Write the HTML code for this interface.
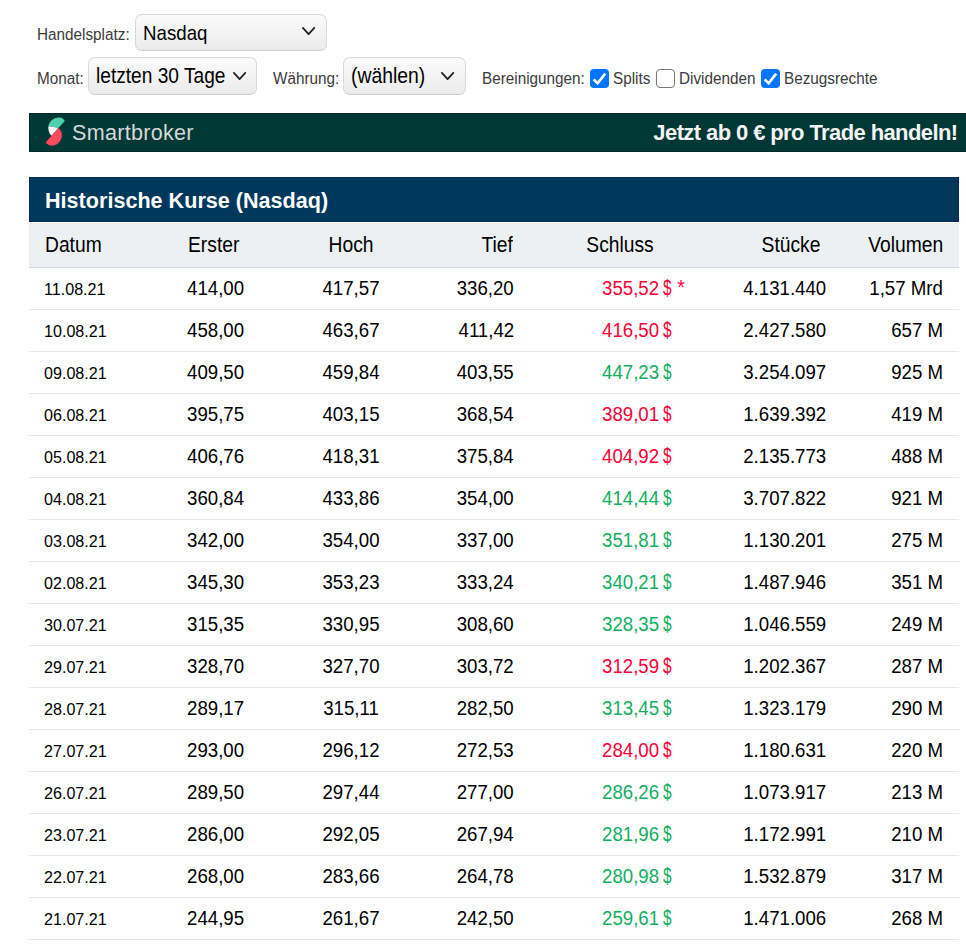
<!DOCTYPE html>
<html><head><meta charset="utf-8"><style>
*{margin:0;padding:0;box-sizing:border-box}
html,body{width:966px;height:951px;overflow:hidden;background:#fff}
body{position:relative;font-family:"Liberation Sans",sans-serif;color:#000}
.t{position:absolute;white-space:nowrap;line-height:1}
.sel{position:absolute;border:1px solid #d9d9d9;border-bottom-color:#cdcdcd;border-radius:7px;background:linear-gradient(#fbfbfb,#ebebeb)}
.chev{position:absolute}
.cb{position:absolute;border-radius:4px}
.line{position:absolute;left:29px;width:930px;height:1px;background:#e8e8e8}
</style></head>
<body>
<div class="t" style="top:26.63px;font-size:15.8px;color:#3b3b3b;left:36.7px;transform:scaleX(0.968);transform-origin:left 0;">Handelsplatz:</div>
<div class="sel" style="left:135px;top:14px;width:192px;height:37px"></div>
<div class="t" style="top:22.22px;font-size:21px;left:143px;transform:scaleX(0.89);transform-origin:left 0;">Nasdaq</div>
<svg class="chev" style="left:300.8px;top:26.3px" width="16" height="11" viewBox="0 0 16 11"><path d="M1.9 1.9 L7.6 8.1 L13.3 1.9" fill="none" stroke="#222" stroke-width="1.8" stroke-linecap="round" stroke-linejoin="round"/></svg>
<div class="t" style="top:70.63px;font-size:15.8px;color:#3b3b3b;left:36.7px;transform:scaleX(0.968);transform-origin:left 0;">Monat:</div>
<div class="sel" style="left:88px;top:57px;width:169px;height:38px"></div>
<div class="t" style="top:65.80px;font-size:21.5px;left:96.3px;transform:scaleX(0.89);transform-origin:left 0;">letzten 30 Tage</div>
<svg class="chev" style="left:232.2px;top:71px" width="16" height="11" viewBox="0 0 16 11"><path d="M1.9 1.9 L7.6 8.1 L13.3 1.9" fill="none" stroke="#222" stroke-width="1.8" stroke-linecap="round" stroke-linejoin="round"/></svg>
<div class="t" style="top:70.63px;font-size:15.8px;color:#3b3b3b;left:272.8px;transform:scaleX(0.968);transform-origin:left 0;">Währung:</div>
<div class="sel" style="left:343px;top:57px;width:123px;height:38px"></div>
<div class="t" style="top:65.80px;font-size:21.5px;left:351px;transform:scaleX(0.9);transform-origin:left 0;">(wählen)</div>
<svg class="chev" style="left:439.7px;top:71px" width="16" height="11" viewBox="0 0 16 11"><path d="M1.9 1.9 L7.6 8.1 L13.3 1.9" fill="none" stroke="#222" stroke-width="1.8" stroke-linecap="round" stroke-linejoin="round"/></svg>
<div class="t" style="top:70.63px;font-size:15.8px;color:#3b3b3b;left:481.7px;transform:scaleX(0.968);transform-origin:left 0;">Bereinigungen:</div>
<div class="cb" style="left:590px;top:69px;width:19px;height:19px;background:#0075ff"></div><svg class="chev" style="left:590px;top:69px" width="19" height="19" viewBox="0 0 19 19"><path d="M3.6 10.4 L7.6 14.3 L15.2 4.6" fill="none" stroke="#fff" stroke-width="2.6"/></svg>
<div class="t" style="top:70.63px;font-size:15.8px;color:#3b3b3b;left:612.7px;transform:scaleX(0.968);transform-origin:left 0;">Splits</div>
<div class="cb" style="left:656px;top:69px;width:19px;height:19px;border:1px solid #767676;background:#fff"></div>
<div class="t" style="top:70.63px;font-size:15.8px;color:#3b3b3b;left:678.5px;transform:scaleX(0.968);transform-origin:left 0;">Dividenden</div>
<div class="cb" style="left:761px;top:69px;width:19px;height:19px;background:#0075ff"></div><svg class="chev" style="left:761px;top:69px" width="19" height="19" viewBox="0 0 19 19"><path d="M3.6 10.4 L7.6 14.3 L15.2 4.6" fill="none" stroke="#fff" stroke-width="2.6"/></svg>
<div class="t" style="top:70.63px;font-size:15.8px;color:#3b3b3b;left:784.2px;transform:scaleX(0.968);transform-origin:left 0;">Bezugsrechte</div>
<div style="position:absolute;left:29px;top:113px;width:937px;height:39px;background:#003836;border:1px solid #002a28;border-right:0"></div>
<svg style="position:absolute;left:40px;top:114px" width="32" height="36" viewBox="0 0 32 36"><path d="M8.4 12.2 C9.5 6.5 15 3.2 19.5 3.6 C22 3.8 23.8 5.2 24.8 7 L18.2 14.3 C15 13 11.5 12.2 8.4 12.2 Z" fill="#4fd0ac"/><path d="M8.4 12.2 C11.5 12.2 15 13 18.2 14.3 L11.6 21.8 C9 19.5 8 16 8.4 12.2 Z" fill="#fff"/><path d="M18.2 14.3 C21.5 16 22.5 20 21.5 24 C20 29 16 31.5 12 31.5 C9.5 31.5 7 30.5 5.6 28.4 C8 25.5 10 24 11.6 21.8 Z" fill="#fa4a5e"/></svg>
<div class="t" style="top:121.98px;font-size:22px;color:#d5d9d9;letter-spacing:0.3px;left:72px;transform:scaleX(0.98);transform-origin:left 0;">Smartbroker</div>
<div class="t" style="top:121.68px;font-size:22px;font-weight:700;color:#f4f4f4;letter-spacing:-0.6px;right:8.5px;">Jetzt ab 0 € pro Trade handeln!</div>
<div style="position:absolute;left:29px;top:177px;width:930px;height:45px;background:#00385c;border:1px solid #002e56"></div>
<div class="t" style="top:189.72px;font-size:21.6px;font-weight:700;color:#fff;left:45px;">Historische Kurse (Nasdaq)</div>
<div style="position:absolute;left:29px;top:223px;width:930px;height:44px;background:#ecf0f3"></div>
<div style="position:absolute;left:29px;top:267px;width:930px;height:1px;background:#d0d9e0"></div>
<div class="t" style="top:234.68px;font-size:21.4px;left:44.5px;transform:scaleX(0.9);transform-origin:left 0;">Datum</div>
<div class="t" style="top:234.68px;font-size:21.4px;left:188px;transform:scaleX(0.9);transform-origin:left 0;">Erster</div>
<div class="t" style="top:234.68px;font-size:21.4px;left:200.5px;width:300px;text-align:center;transform:scaleX(0.9);transform-origin:center 0;">Hoch</div>
<div class="t" style="top:234.68px;font-size:21.4px;right:453px;transform:scaleX(0.9);transform-origin:right 0;">Tief</div>
<div class="t" style="top:234.68px;font-size:21.4px;left:469.5px;width:300px;text-align:center;transform:scaleX(0.9);transform-origin:center 0;">Schluss</div>
<div class="t" style="top:234.68px;font-size:21.4px;right:146px;transform:scaleX(0.9);transform-origin:right 0;">Stücke</div>
<div class="t" style="top:234.68px;font-size:21.4px;right:23px;transform:scaleX(0.9);transform-origin:right 0;">Volumen</div>
<div class="t" style="top:282.18px;font-size:16.8px;left:43.8px;transform:scaleX(0.96);transform-origin:left 0;">11.08.21</div>
<div class="t" style="top:278.05px;font-size:20.5px;left:187px;transform:scaleX(0.91);transform-origin:left 0;">414,00</div>
<div class="t" style="top:278.05px;font-size:20.5px;left:200.5px;width:300px;text-align:center;transform:scaleX(0.91);transform-origin:center 0;">417,57</div>
<div class="t" style="top:278.05px;font-size:20.5px;right:452px;transform:scaleX(0.91);transform-origin:right 0;">336,20</div>
<div class="t" style="top:278.05px;font-size:20.5px;color:#ff0036;left:602px;transform:scaleX(0.91);transform-origin:left 0;">355,52</div>
<div class="t" style="top:277.38px;font-size:22px;color:#ff0036;left:662.8px;transform:scaleX(0.7);transform-origin:left 0;">$</div>
<div class="t" style="top:277.89px;font-size:19.5px;color:#ff0036;left:677.2px;">*</div>
<div class="t" style="top:278.05px;font-size:20.5px;right:140px;transform:scaleX(0.91);transform-origin:right 0;">4.131.440</div>
<div class="t" style="top:278.05px;font-size:20.5px;right:23px;transform:scaleX(0.91);transform-origin:right 0;">1,57 Mrd</div>
<div class="line" style="top:309px"></div>
<div class="t" style="top:324.18px;font-size:16.8px;left:43.8px;transform:scaleX(0.96);transform-origin:left 0;">10.08.21</div>
<div class="t" style="top:320.05px;font-size:20.5px;left:187px;transform:scaleX(0.91);transform-origin:left 0;">458,00</div>
<div class="t" style="top:320.05px;font-size:20.5px;left:200.5px;width:300px;text-align:center;transform:scaleX(0.91);transform-origin:center 0;">463,67</div>
<div class="t" style="top:320.05px;font-size:20.5px;right:452px;transform:scaleX(0.91);transform-origin:right 0;">411,42</div>
<div class="t" style="top:320.05px;font-size:20.5px;color:#ff0036;left:602px;transform:scaleX(0.91);transform-origin:left 0;">416,50</div>
<div class="t" style="top:319.38px;font-size:22px;color:#ff0036;left:662.8px;transform:scaleX(0.7);transform-origin:left 0;">$</div>
<div class="t" style="top:320.05px;font-size:20.5px;right:140px;transform:scaleX(0.91);transform-origin:right 0;">2.427.580</div>
<div class="t" style="top:320.05px;font-size:20.5px;right:23px;transform:scaleX(0.91);transform-origin:right 0;">657 M</div>
<div class="line" style="top:351px"></div>
<div class="t" style="top:366.18px;font-size:16.8px;left:43.8px;transform:scaleX(0.96);transform-origin:left 0;">09.08.21</div>
<div class="t" style="top:362.05px;font-size:20.5px;left:187px;transform:scaleX(0.91);transform-origin:left 0;">409,50</div>
<div class="t" style="top:362.05px;font-size:20.5px;left:200.5px;width:300px;text-align:center;transform:scaleX(0.91);transform-origin:center 0;">459,84</div>
<div class="t" style="top:362.05px;font-size:20.5px;right:452px;transform:scaleX(0.91);transform-origin:right 0;">403,55</div>
<div class="t" style="top:362.05px;font-size:20.5px;color:#12af5f;left:602px;transform:scaleX(0.91);transform-origin:left 0;">447,23</div>
<div class="t" style="top:361.38px;font-size:22px;color:#12af5f;left:662.8px;transform:scaleX(0.7);transform-origin:left 0;">$</div>
<div class="t" style="top:362.05px;font-size:20.5px;right:140px;transform:scaleX(0.91);transform-origin:right 0;">3.254.097</div>
<div class="t" style="top:362.05px;font-size:20.5px;right:23px;transform:scaleX(0.91);transform-origin:right 0;">925 M</div>
<div class="line" style="top:393px"></div>
<div class="t" style="top:408.18px;font-size:16.8px;left:43.8px;transform:scaleX(0.96);transform-origin:left 0;">06.08.21</div>
<div class="t" style="top:404.05px;font-size:20.5px;left:187px;transform:scaleX(0.91);transform-origin:left 0;">395,75</div>
<div class="t" style="top:404.05px;font-size:20.5px;left:200.5px;width:300px;text-align:center;transform:scaleX(0.91);transform-origin:center 0;">403,15</div>
<div class="t" style="top:404.05px;font-size:20.5px;right:452px;transform:scaleX(0.91);transform-origin:right 0;">368,54</div>
<div class="t" style="top:404.05px;font-size:20.5px;color:#ff0036;left:602px;transform:scaleX(0.91);transform-origin:left 0;">389,01</div>
<div class="t" style="top:403.38px;font-size:22px;color:#ff0036;left:662.8px;transform:scaleX(0.7);transform-origin:left 0;">$</div>
<div class="t" style="top:404.05px;font-size:20.5px;right:140px;transform:scaleX(0.91);transform-origin:right 0;">1.639.392</div>
<div class="t" style="top:404.05px;font-size:20.5px;right:23px;transform:scaleX(0.91);transform-origin:right 0;">419 M</div>
<div class="line" style="top:435px"></div>
<div class="t" style="top:450.18px;font-size:16.8px;left:43.8px;transform:scaleX(0.96);transform-origin:left 0;">05.08.21</div>
<div class="t" style="top:446.05px;font-size:20.5px;left:187px;transform:scaleX(0.91);transform-origin:left 0;">406,76</div>
<div class="t" style="top:446.05px;font-size:20.5px;left:200.5px;width:300px;text-align:center;transform:scaleX(0.91);transform-origin:center 0;">418,31</div>
<div class="t" style="top:446.05px;font-size:20.5px;right:452px;transform:scaleX(0.91);transform-origin:right 0;">375,84</div>
<div class="t" style="top:446.05px;font-size:20.5px;color:#ff0036;left:602px;transform:scaleX(0.91);transform-origin:left 0;">404,92</div>
<div class="t" style="top:445.38px;font-size:22px;color:#ff0036;left:662.8px;transform:scaleX(0.7);transform-origin:left 0;">$</div>
<div class="t" style="top:446.05px;font-size:20.5px;right:140px;transform:scaleX(0.91);transform-origin:right 0;">2.135.773</div>
<div class="t" style="top:446.05px;font-size:20.5px;right:23px;transform:scaleX(0.91);transform-origin:right 0;">488 M</div>
<div class="line" style="top:477px"></div>
<div class="t" style="top:492.18px;font-size:16.8px;left:43.8px;transform:scaleX(0.96);transform-origin:left 0;">04.08.21</div>
<div class="t" style="top:488.05px;font-size:20.5px;left:187px;transform:scaleX(0.91);transform-origin:left 0;">360,84</div>
<div class="t" style="top:488.05px;font-size:20.5px;left:200.5px;width:300px;text-align:center;transform:scaleX(0.91);transform-origin:center 0;">433,86</div>
<div class="t" style="top:488.05px;font-size:20.5px;right:452px;transform:scaleX(0.91);transform-origin:right 0;">354,00</div>
<div class="t" style="top:488.05px;font-size:20.5px;color:#12af5f;left:602px;transform:scaleX(0.91);transform-origin:left 0;">414,44</div>
<div class="t" style="top:487.38px;font-size:22px;color:#12af5f;left:662.8px;transform:scaleX(0.7);transform-origin:left 0;">$</div>
<div class="t" style="top:488.05px;font-size:20.5px;right:140px;transform:scaleX(0.91);transform-origin:right 0;">3.707.822</div>
<div class="t" style="top:488.05px;font-size:20.5px;right:23px;transform:scaleX(0.91);transform-origin:right 0;">921 M</div>
<div class="line" style="top:519px"></div>
<div class="t" style="top:534.18px;font-size:16.8px;left:43.8px;transform:scaleX(0.96);transform-origin:left 0;">03.08.21</div>
<div class="t" style="top:530.05px;font-size:20.5px;left:187px;transform:scaleX(0.91);transform-origin:left 0;">342,00</div>
<div class="t" style="top:530.05px;font-size:20.5px;left:200.5px;width:300px;text-align:center;transform:scaleX(0.91);transform-origin:center 0;">354,00</div>
<div class="t" style="top:530.05px;font-size:20.5px;right:452px;transform:scaleX(0.91);transform-origin:right 0;">337,00</div>
<div class="t" style="top:530.05px;font-size:20.5px;color:#12af5f;left:602px;transform:scaleX(0.91);transform-origin:left 0;">351,81</div>
<div class="t" style="top:529.38px;font-size:22px;color:#12af5f;left:662.8px;transform:scaleX(0.7);transform-origin:left 0;">$</div>
<div class="t" style="top:530.05px;font-size:20.5px;right:140px;transform:scaleX(0.91);transform-origin:right 0;">1.130.201</div>
<div class="t" style="top:530.05px;font-size:20.5px;right:23px;transform:scaleX(0.91);transform-origin:right 0;">275 M</div>
<div class="line" style="top:561px"></div>
<div class="t" style="top:576.18px;font-size:16.8px;left:43.8px;transform:scaleX(0.96);transform-origin:left 0;">02.08.21</div>
<div class="t" style="top:572.05px;font-size:20.5px;left:187px;transform:scaleX(0.91);transform-origin:left 0;">345,30</div>
<div class="t" style="top:572.05px;font-size:20.5px;left:200.5px;width:300px;text-align:center;transform:scaleX(0.91);transform-origin:center 0;">353,23</div>
<div class="t" style="top:572.05px;font-size:20.5px;right:452px;transform:scaleX(0.91);transform-origin:right 0;">333,24</div>
<div class="t" style="top:572.05px;font-size:20.5px;color:#12af5f;left:602px;transform:scaleX(0.91);transform-origin:left 0;">340,21</div>
<div class="t" style="top:571.38px;font-size:22px;color:#12af5f;left:662.8px;transform:scaleX(0.7);transform-origin:left 0;">$</div>
<div class="t" style="top:572.05px;font-size:20.5px;right:140px;transform:scaleX(0.91);transform-origin:right 0;">1.487.946</div>
<div class="t" style="top:572.05px;font-size:20.5px;right:23px;transform:scaleX(0.91);transform-origin:right 0;">351 M</div>
<div class="line" style="top:603px"></div>
<div class="t" style="top:618.18px;font-size:16.8px;left:43.8px;transform:scaleX(0.96);transform-origin:left 0;">30.07.21</div>
<div class="t" style="top:614.05px;font-size:20.5px;left:187px;transform:scaleX(0.91);transform-origin:left 0;">315,35</div>
<div class="t" style="top:614.05px;font-size:20.5px;left:200.5px;width:300px;text-align:center;transform:scaleX(0.91);transform-origin:center 0;">330,95</div>
<div class="t" style="top:614.05px;font-size:20.5px;right:452px;transform:scaleX(0.91);transform-origin:right 0;">308,60</div>
<div class="t" style="top:614.05px;font-size:20.5px;color:#12af5f;left:602px;transform:scaleX(0.91);transform-origin:left 0;">328,35</div>
<div class="t" style="top:613.38px;font-size:22px;color:#12af5f;left:662.8px;transform:scaleX(0.7);transform-origin:left 0;">$</div>
<div class="t" style="top:614.05px;font-size:20.5px;right:140px;transform:scaleX(0.91);transform-origin:right 0;">1.046.559</div>
<div class="t" style="top:614.05px;font-size:20.5px;right:23px;transform:scaleX(0.91);transform-origin:right 0;">249 M</div>
<div class="line" style="top:645px"></div>
<div class="t" style="top:660.18px;font-size:16.8px;left:43.8px;transform:scaleX(0.96);transform-origin:left 0;">29.07.21</div>
<div class="t" style="top:656.05px;font-size:20.5px;left:187px;transform:scaleX(0.91);transform-origin:left 0;">328,70</div>
<div class="t" style="top:656.05px;font-size:20.5px;left:200.5px;width:300px;text-align:center;transform:scaleX(0.91);transform-origin:center 0;">327,70</div>
<div class="t" style="top:656.05px;font-size:20.5px;right:452px;transform:scaleX(0.91);transform-origin:right 0;">303,72</div>
<div class="t" style="top:656.05px;font-size:20.5px;color:#ff0036;left:602px;transform:scaleX(0.91);transform-origin:left 0;">312,59</div>
<div class="t" style="top:655.38px;font-size:22px;color:#ff0036;left:662.8px;transform:scaleX(0.7);transform-origin:left 0;">$</div>
<div class="t" style="top:656.05px;font-size:20.5px;right:140px;transform:scaleX(0.91);transform-origin:right 0;">1.202.367</div>
<div class="t" style="top:656.05px;font-size:20.5px;right:23px;transform:scaleX(0.91);transform-origin:right 0;">287 M</div>
<div class="line" style="top:687px"></div>
<div class="t" style="top:702.18px;font-size:16.8px;left:43.8px;transform:scaleX(0.96);transform-origin:left 0;">28.07.21</div>
<div class="t" style="top:698.05px;font-size:20.5px;left:187px;transform:scaleX(0.91);transform-origin:left 0;">289,17</div>
<div class="t" style="top:698.05px;font-size:20.5px;left:200.5px;width:300px;text-align:center;transform:scaleX(0.91);transform-origin:center 0;">315,11</div>
<div class="t" style="top:698.05px;font-size:20.5px;right:452px;transform:scaleX(0.91);transform-origin:right 0;">282,50</div>
<div class="t" style="top:698.05px;font-size:20.5px;color:#12af5f;left:602px;transform:scaleX(0.91);transform-origin:left 0;">313,45</div>
<div class="t" style="top:697.38px;font-size:22px;color:#12af5f;left:662.8px;transform:scaleX(0.7);transform-origin:left 0;">$</div>
<div class="t" style="top:698.05px;font-size:20.5px;right:140px;transform:scaleX(0.91);transform-origin:right 0;">1.323.179</div>
<div class="t" style="top:698.05px;font-size:20.5px;right:23px;transform:scaleX(0.91);transform-origin:right 0;">290 M</div>
<div class="line" style="top:729px"></div>
<div class="t" style="top:744.18px;font-size:16.8px;left:43.8px;transform:scaleX(0.96);transform-origin:left 0;">27.07.21</div>
<div class="t" style="top:740.05px;font-size:20.5px;left:187px;transform:scaleX(0.91);transform-origin:left 0;">293,00</div>
<div class="t" style="top:740.05px;font-size:20.5px;left:200.5px;width:300px;text-align:center;transform:scaleX(0.91);transform-origin:center 0;">296,12</div>
<div class="t" style="top:740.05px;font-size:20.5px;right:452px;transform:scaleX(0.91);transform-origin:right 0;">272,53</div>
<div class="t" style="top:740.05px;font-size:20.5px;color:#ff0036;left:602px;transform:scaleX(0.91);transform-origin:left 0;">284,00</div>
<div class="t" style="top:739.38px;font-size:22px;color:#ff0036;left:662.8px;transform:scaleX(0.7);transform-origin:left 0;">$</div>
<div class="t" style="top:740.05px;font-size:20.5px;right:140px;transform:scaleX(0.91);transform-origin:right 0;">1.180.631</div>
<div class="t" style="top:740.05px;font-size:20.5px;right:23px;transform:scaleX(0.91);transform-origin:right 0;">220 M</div>
<div class="line" style="top:771px"></div>
<div class="t" style="top:786.18px;font-size:16.8px;left:43.8px;transform:scaleX(0.96);transform-origin:left 0;">26.07.21</div>
<div class="t" style="top:782.05px;font-size:20.5px;left:187px;transform:scaleX(0.91);transform-origin:left 0;">289,50</div>
<div class="t" style="top:782.05px;font-size:20.5px;left:200.5px;width:300px;text-align:center;transform:scaleX(0.91);transform-origin:center 0;">297,44</div>
<div class="t" style="top:782.05px;font-size:20.5px;right:452px;transform:scaleX(0.91);transform-origin:right 0;">277,00</div>
<div class="t" style="top:782.05px;font-size:20.5px;color:#12af5f;left:602px;transform:scaleX(0.91);transform-origin:left 0;">286,26</div>
<div class="t" style="top:781.38px;font-size:22px;color:#12af5f;left:662.8px;transform:scaleX(0.7);transform-origin:left 0;">$</div>
<div class="t" style="top:782.05px;font-size:20.5px;right:140px;transform:scaleX(0.91);transform-origin:right 0;">1.073.917</div>
<div class="t" style="top:782.05px;font-size:20.5px;right:23px;transform:scaleX(0.91);transform-origin:right 0;">213 M</div>
<div class="line" style="top:813px"></div>
<div class="t" style="top:828.18px;font-size:16.8px;left:43.8px;transform:scaleX(0.96);transform-origin:left 0;">23.07.21</div>
<div class="t" style="top:824.05px;font-size:20.5px;left:187px;transform:scaleX(0.91);transform-origin:left 0;">286,00</div>
<div class="t" style="top:824.05px;font-size:20.5px;left:200.5px;width:300px;text-align:center;transform:scaleX(0.91);transform-origin:center 0;">292,05</div>
<div class="t" style="top:824.05px;font-size:20.5px;right:452px;transform:scaleX(0.91);transform-origin:right 0;">267,94</div>
<div class="t" style="top:824.05px;font-size:20.5px;color:#12af5f;left:602px;transform:scaleX(0.91);transform-origin:left 0;">281,96</div>
<div class="t" style="top:823.38px;font-size:22px;color:#12af5f;left:662.8px;transform:scaleX(0.7);transform-origin:left 0;">$</div>
<div class="t" style="top:824.05px;font-size:20.5px;right:140px;transform:scaleX(0.91);transform-origin:right 0;">1.172.991</div>
<div class="t" style="top:824.05px;font-size:20.5px;right:23px;transform:scaleX(0.91);transform-origin:right 0;">210 M</div>
<div class="line" style="top:855px"></div>
<div class="t" style="top:870.18px;font-size:16.8px;left:43.8px;transform:scaleX(0.96);transform-origin:left 0;">22.07.21</div>
<div class="t" style="top:866.05px;font-size:20.5px;left:187px;transform:scaleX(0.91);transform-origin:left 0;">268,00</div>
<div class="t" style="top:866.05px;font-size:20.5px;left:200.5px;width:300px;text-align:center;transform:scaleX(0.91);transform-origin:center 0;">283,66</div>
<div class="t" style="top:866.05px;font-size:20.5px;right:452px;transform:scaleX(0.91);transform-origin:right 0;">264,78</div>
<div class="t" style="top:866.05px;font-size:20.5px;color:#12af5f;left:602px;transform:scaleX(0.91);transform-origin:left 0;">280,98</div>
<div class="t" style="top:865.38px;font-size:22px;color:#12af5f;left:662.8px;transform:scaleX(0.7);transform-origin:left 0;">$</div>
<div class="t" style="top:866.05px;font-size:20.5px;right:140px;transform:scaleX(0.91);transform-origin:right 0;">1.532.879</div>
<div class="t" style="top:866.05px;font-size:20.5px;right:23px;transform:scaleX(0.91);transform-origin:right 0;">317 M</div>
<div class="line" style="top:897px"></div>
<div class="t" style="top:912.18px;font-size:16.8px;left:43.8px;transform:scaleX(0.96);transform-origin:left 0;">21.07.21</div>
<div class="t" style="top:908.05px;font-size:20.5px;left:187px;transform:scaleX(0.91);transform-origin:left 0;">244,95</div>
<div class="t" style="top:908.05px;font-size:20.5px;left:200.5px;width:300px;text-align:center;transform:scaleX(0.91);transform-origin:center 0;">261,67</div>
<div class="t" style="top:908.05px;font-size:20.5px;right:452px;transform:scaleX(0.91);transform-origin:right 0;">242,50</div>
<div class="t" style="top:908.05px;font-size:20.5px;color:#12af5f;left:602px;transform:scaleX(0.91);transform-origin:left 0;">259,61</div>
<div class="t" style="top:907.38px;font-size:22px;color:#12af5f;left:662.8px;transform:scaleX(0.7);transform-origin:left 0;">$</div>
<div class="t" style="top:908.05px;font-size:20.5px;right:140px;transform:scaleX(0.91);transform-origin:right 0;">1.471.006</div>
<div class="t" style="top:908.05px;font-size:20.5px;right:23px;transform:scaleX(0.91);transform-origin:right 0;">268 M</div>
<div class="line" style="top:939px"></div>
</body></html>
